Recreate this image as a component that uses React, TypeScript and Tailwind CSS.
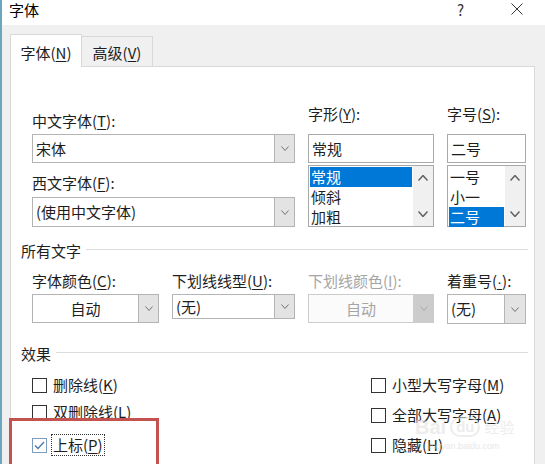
import React from 'react';

function Chev({ up = false, color = '#606060', w = 9, h = 5, sw = 1 }: { up?: boolean; color?: string; w?: number; h?: number; sw?: number }) {
  const pts = up ? `0.5,${h - 0.5} ${w / 2},0.5 ${w - 0.5},${h - 0.5}` : `0.5,0.5 ${w / 2},${h - 0.5} ${w - 0.5},0.5`;
  return (
    <svg width={w} height={h} viewBox={`0 0 ${w} ${h}`}>
      <polyline points={pts} fill="none" stroke={color} strokeWidth={sw} />
    </svg>
  );
}

const U = ({ children }: { children: React.ReactNode }) => (
  <span className="underline underline-offset-2 decoration-1">{children}</span>
);

function Combo({ text, center = false, disabled = false, h = 'h-[29px]', btn = 'w-[20px]' }: { text: string; center?: boolean; disabled?: boolean; h?: string; btn?: string }) {
  return (
    <div className={`flex ${h} border ${disabled ? 'border-[#cccccc] bg-[#fbfbfb]' : 'border-[#b4b4b4] bg-white'}`}>
      <div className={`flex-1 flex items-center ${center ? 'justify-center' : 'pl-[3px]'} ${disabled ? 'text-[#a5a5a5]' : ''}`}>{text}</div>
      <div className={`${btn} flex items-center justify-center border-l ${disabled ? 'bg-[#cccccc] border-[#cccccc]' : 'bg-[#e3e3e3] border-[#b4b4b4]'}`}>
        <Chev color={disabled ? '#a8a8a8' : '#707070'} w={8} h={5} />
      </div>
    </div>
  );
}

function ListBox({ items, sel }: { items: string[]; sel: number }) {
  return (
    <div className="flex h-[62px] border border-[#a9a9a9] bg-white">
      <div className="flex-1 flex flex-col p-px">
        {items.map((t, i) => (
          <div key={t} className={`h-[20px] pl-[1px] leading-[20px] ${i === sel ? 'bg-[#0078d7] text-white' : ''}`}>{t}</div>
        ))}
      </div>
      <div className="w-[20px] bg-[#f0f0f0] flex flex-col items-center justify-between py-[9px]">
        <Chev up color="#606060" w={10} h={6} sw={1.5} />
        <Chev color="#606060" w={10} h={6} sw={1.5} />
      </div>
    </div>
  );
}

function Check({ label, checked = false, focus = false }: { label: React.ReactNode; checked?: boolean; focus?: boolean }) {
  return (
    <div className="flex items-center h-[20px]">
      <div className={`w-[15px] h-[15px] border bg-white flex items-center justify-center ${checked ? 'border-[#7e9bc0]' : 'border-[#333333]'}`}>
        {checked && (
          <svg width="11" height="9" viewBox="0 0 11 9">
            <polyline points="1,4.5 4,7.5 10,1" fill="none" stroke="#4a78ad" strokeWidth="1.3" />
          </svg>
        )}
      </div>
      <span className={`ml-[5px] px-[1px] ${focus ? 'outline outline-1 outline-dotted outline-[#333]' : ''}`}>{label}</span>
    </div>
  );
}

function Header({ title }: { title: string }) {
  return (
    <div className="flex items-center h-[20px] pl-[10px] pr-[6px]">
      <span>{title}</span>
      <div className="flex-1 h-px bg-[#dcdcdc] ml-[5px] -mt-[3px]" />
    </div>
  );
}

export default function App() {
  return (
    <div className="relative w-[545px] h-[464px] overflow-hidden bg-[#f0f0f0] border-l-2 border-[#6aa6bd] font-[family-name:'Noto_Sans_CJK_SC',sans-serif] text-[15px] leading-[20px] text-[#1e1e1e]">
      {/* title bar */}
      <div className="h-[25px] bg-white flex items-start text-black">
        <span className="pl-[7px] pt-px leading-[17px]">字体</span>
        <span className="ml-auto pt-px leading-[17px] text-[#333]">?</span>
        <svg className="ml-[47px] mr-[22px] mt-[3px]" width="12" height="12" viewBox="0 0 12 12">
          <path d="M0.5 0.5 L11.5 11.5 M11.5 0.5 L0.5 11.5" stroke="#333" strokeWidth="1" />
        </svg>
      </div>

      {/* tabs */}
      <div className="flex items-end pl-[8px] pt-[9px]">
        <div className="relative z-10 -mb-px w-[72px] h-[33px] bg-white border border-b-0 border-[#d9d9d9] flex items-center justify-center pt-[3px]">
          字体(<U>N</U>)
        </div>
        <div className="w-[71px] h-[30px] bg-[#f0f0f0] border border-l-0 border-b-0 border-[#d9d9d9] flex items-center justify-center pt-[3px]">
          高级(<U>V</U>)
        </div>
      </div>

      {/* panel */}
      <div className="ml-[8px] w-[525px] h-[420px] bg-white border border-[#d9d9d9]">
        <div className="flex pt-[37px] pl-[21px]">
          <div className="w-[263px]">
            <div className="mt-[7px] h-[20px]">中文字体(<U>T</U>):</div>
            <div className="mt-[3px]"><Combo text="宋体" /></div>
            <div className="mt-[10px] h-[20px]">西文字体(<U>F</U>):</div>
            <div className="mt-[4px]"><Combo text="(使用中文字体)" h="h-[30px]" /></div>
          </div>
          <div className="ml-[13px] w-[126px]">
            <div className="h-[20px]">字形(<U>Y</U>):</div>
            <div className="mt-[10px] h-[29px] border border-[#a9a9a9] pl-[3px] flex items-center">常规</div>
            <div className="mt-[2px]"><ListBox items={['常规', '倾斜', '加粗']} sel={0} /></div>
          </div>
          <div className="ml-[13px] w-[79px]">
            <div className="h-[20px]">字号(<U>S</U>):</div>
            <div className="mt-[10px] h-[29px] border border-[#a9a9a9] pl-[3px] flex items-center">二号</div>
            <div className="mt-[2px]"><ListBox items={['一号', '小一', '二号']} sel={2} /></div>
          </div>
        </div>

        <div className="mt-[14px]"><Header title="所有文字" /></div>

        <div className="mt-[10px] flex pl-[21px] h-[20px]">
          <div className="w-[127px]">字体颜色(<U>C</U>):</div>
          <div className="ml-[13px] w-[123px]">下划线线型(<U>U</U>):</div>
          <div className="ml-[13px] w-[126px] text-[#a5a5a5]">下划线颜色(<U>I</U>):</div>
          <div className="ml-[13px] w-[79px]">
            着重号(<span className="font-[family-name:'Liberation_Sans',sans-serif] underline underline-offset-2 decoration-1">·</span>):
          </div>
        </div>
        <div className="mt-[3px] flex items-start pl-[21px] h-[30px]">
          <div className="w-[127px]"><Combo text="自动" center /></div>
          <div className="ml-[13px] w-[123px]"><Combo text="(无)" h="h-[25px]" /></div>
          <div className="ml-[13px] w-[126px]"><Combo text="自动" center disabled /></div>
          <div className="ml-[13px] w-[79px]"><Combo text="(无)" h="h-[30px]" btn="w-[21px]" /></div>
        </div>

        <div className="mt-[20px]"><Header title="效果" /></div>

        <div className="mt-[11px] flex pl-[21px]">
          <div className="w-[339px]">
            <Check label={<>删除线(<U>K</U>)</>} />
            <div className="mt-[7px]"><Check label={<>双删除线(<U>L</U>)</>} /></div>
            <div className="mt-[13px]"><Check checked focus label={<>上标(<U>P</U>)</>} /></div>
          </div>
          <div>
            <Check label={<>小型大写字母(<U>M</U>)</>} />
            <div className="mt-[10px]"><Check label={<>全部大写字母(<U>A</U>)</>} /></div>
            <div className="mt-[10px]"><Check label={<>隐藏(<U>H</U>)</>} /></div>
          </div>
        </div>
      </div>

      {/* watermark */}
      <div className="absolute left-[413px] top-[417px] flex items-center gap-[4px] text-[#e2e2e2] opacity-60 pointer-events-none">
        <span className="font-[family-name:'Liberation_Sans',sans-serif] text-[20px] font-bold leading-[20px]">Bai</span>
        <span className="rounded-full border-2 border-[#e2e2e2] px-[4px] font-[family-name:'Liberation_Sans',sans-serif] text-[15px] font-bold leading-[16px]">du</span>
        <span className="text-[15px] leading-[16px]">经验</span>
      </div>
      <div className="absolute left-[425px] top-[441px] text-[9px] leading-[10px] text-[#dedede] opacity-70 font-[family-name:'Liberation_Sans',sans-serif] pointer-events-none">
        jingyan.baidu.com
      </div>

      {/* annotation */}
      <div className="absolute left-[7px] top-[418px] w-[150px] h-[60px] border-[3px] border-[#c4524f] pointer-events-none" />
    </div>
  );
}
